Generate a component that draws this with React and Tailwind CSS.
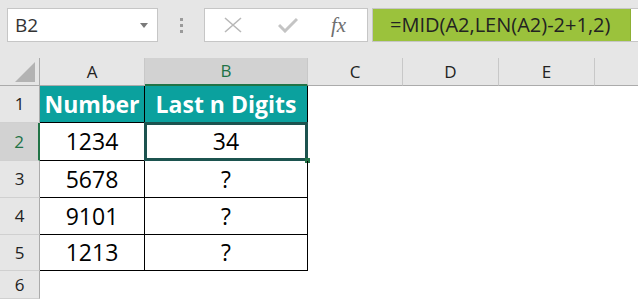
import React from "react";

const F = { fontFamily: '"Open Sans", "Liberation Sans", sans-serif' };

function ColHead({ label, w, selected, last }) {
  return (
    <div
      className={`flex items-center justify-center text-[17px] ${last ? "" : "border-r border-[#c8c8c8]"} ${
        selected ? "bg-[#d2d2d2] text-[#217346] border-b-2 border-b-[#217346]" : "bg-[#e6e6e6] text-[#222] border-b border-b-[#ababab]"
      }`}
      style={{ width: w }}
    >
      {label}
    </div>
  );
}

function RowHead({ n, h, selected }) {
  return (
    <div
      className={`w-[40px] shrink-0 flex items-center justify-center text-[17px] border-b border-b-[#d0d0d0] ${
        selected ? "bg-[#d2d2d2] text-[#217346] border-r-2 border-r-[#217346]" : "bg-[#e6e6e6] text-[#222] border-r border-r-[#ababab]"
      }`}
      style={{ height: h }}
    >
      {n}
    </div>
  );
}

export default function App() {
  const rows = [
    { n: 1, h: 37, a: "Number", b: "Last n Digits", head: true },
    { n: 2, h: 38, a: "1234", b: "34", sel: true },
    { n: 3, h: 37, a: "5678", b: "?" },
    { n: 4, h: 37, a: "9101", b: "?" },
    { n: 5, h: 36, a: "1213", b: "?" },
  ];
  return (
    <div className="w-[638px] h-[299px] overflow-hidden bg-white" style={F}>
      {/* formula bar */}
      <div className="h-[58px] bg-[#e6e6e6] pt-[8px] flex items-start">
        <div className="ml-[7px] w-[151px] h-[34px] bg-white border border-[#c6c6c6] flex items-center justify-between pl-[7px] pr-[9px]">
          <span className="text-[19px] text-[#333]">B2</span>
          <svg width="8" height="5" viewBox="0 0 8 5">
            <path d="M0 0 L8 0 L4 5 Z" fill="#7a7a7a" />
          </svg>
        </div>
        <div className="w-[46px] h-[34px] flex flex-col items-center justify-center gap-[3px]">
          <div className="w-[3px] h-[3px] bg-[#9a9a9a]" />
          <div className="w-[3px] h-[3px] bg-[#9a9a9a]" />
          <div className="w-[3px] h-[3px] bg-[#9a9a9a]" />
        </div>
        <div className="w-[164px] h-[34px] bg-white border border-[#c6c6c6] flex items-center">
          <svg className="ml-[19px]" width="18" height="16" viewBox="0 0 18 16">
            <path d="M1 1 L17 15 M17 1 L1 15" stroke="#b8b8b8" strokeWidth="1.6" fill="none" />
          </svg>
          <svg className="ml-[36px]" width="20" height="16" viewBox="0 0 20 16">
            <path d="M1 8 L7 14 L19 2" stroke="#c4c4c4" strokeWidth="3" fill="none" />
          </svg>
          <span
            className="ml-[33px] text-[21px] italic text-[#6f6f6f] leading-none"
            style={{ fontFamily: '"Liberation Serif", "DejaVu Serif", serif' }}
          >
            fx
          </span>
        </div>
        <div className="ml-[4px] flex-1 h-[34px] bg-white border border-[#c6c6c6] border-r-0 flex">
          <div className="w-[258px] h-full bg-[#9bc23c] border-r border-[#8db033] flex items-center pl-[17px] text-[20px] text-[#222]">
            =MID(A2,LEN(A2)-2+1,2)
          </div>
        </div>
      </div>

      {/* column headers */}
      <div className="flex h-[28px]">
        <div className="w-[40px] shrink-0 bg-[#e6e6e6] border-r border-r-[#ababab] border-b border-b-[#ababab] flex items-end justify-end pr-[4px] pb-[3px]">
          <svg width="20" height="20" viewBox="0 0 20 20">
            <path d="M20 0 L20 20 L0 20 Z" fill="#b3b3b3" />
          </svg>
        </div>
        <ColHead label="A" w={105} />
        <ColHead label="B" w={163} selected />
        <ColHead label="C" w={95} />
        <ColHead label="D" w={96} />
        <ColHead label="E" w={96} />
        <ColHead label="" w={43} last />
      </div>

      {rows.map((r) => (
        <div key={r.n} className="flex" style={{ height: r.h }}>
          <RowHead n={r.n} h={r.h} selected={r.sel} />
          <div
            className={`w-[105px] shrink-0 flex items-center justify-center text-[23px] border-r border-b border-black ${
              r.head ? "bg-[#0ba19e] text-white font-bold" : "text-black"
            }`}
          >
            {r.a}
          </div>
          <div
            className={`relative w-[163px] shrink-0 flex items-center justify-center text-[23px] border-r border-b border-black ${
              r.head ? "bg-[#0ba19e] text-white font-bold" : "text-black"
            }`}
          >
            {r.b}
            {r.sel && (
              <>
                <div className="absolute -left-[1px] -top-[1px] right-[-1px] bottom-[-1px] border-[3px] border-[#1c534f]" />
                <div className="absolute -right-[3px] -bottom-[3px] w-[5px] h-[5px] bg-[#217346]" />
              </>
            )}
          </div>
          <div className="flex-1" />
        </div>
      ))}
      <div className="flex h-[28px]">
        <RowHead n={6} h={28} />
        <div className="flex-1" />
      </div>
    </div>
  );
}
